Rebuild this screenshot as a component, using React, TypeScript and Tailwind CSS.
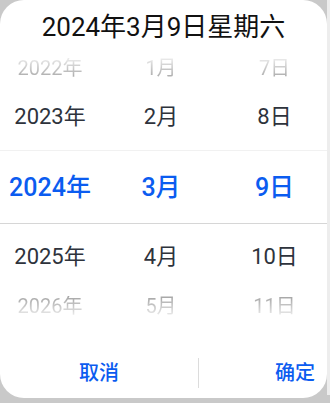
import React from "react";

const font = { fontFamily: 'Roboto, "Noto Sans CJK SC", sans-serif' };

function Row({ items, kind }: { items: string[]; kind: "fadeTop" | "fadeBottom" | "normal" | "selected" }) {
  const h =
    kind === "fadeTop" || kind === "fadeBottom" ? "h-[32px]" : kind === "normal" ? "h-[66px]" : "h-[74px]";
  const text =
    kind === "fadeTop"
      ? "text-[20px] bg-gradient-to-b from-[#ececec] to-[#a9a9a9] bg-clip-text text-transparent"
      : kind === "fadeBottom"
      ? "text-[20px] bg-gradient-to-b from-[#a4a4a4] to-[#ececec] bg-clip-text text-transparent"
      : kind === "normal"
      ? "text-[22px] text-[#2e333c]"
      : "text-[25px] font-medium text-[#0b5cf0]";
  const border = kind === "selected" ? "border-t border-b border-t-[#f1f1f1] border-b-[#d6d6d6]" : "";
  return (
    <div className={`grid grid-cols-[100px_122px_105px] items-center ${h} ${border}`}>
      {items.map((t, i) => (
        <div key={i} className="flex justify-center">
          <span className={`leading-none ${text}`}>{t}</span>
        </div>
      ))}
    </div>
  );
}

export default function App() {
  return (
    <div className="w-[330px] h-[403px] bg-[#c9c9c9] flex" style={font}>
      <div className="w-[327px] h-[398px] bg-white rounded-[24px] flex flex-col">
        <div className="h-[52px] flex items-center justify-center pt-[2px]">
          <span className="text-[26px] font-normal text-[#111111] leading-none">2024年3月9日星期六</span>
        </div>
        <Row kind="fadeTop" items={["2022年", "1月", "7日"]} />
        <Row kind="normal" items={["2023年", "2月", "8日"]} />
        <Row kind="selected" items={["2024年", "3月", "9日"]} />
        <Row kind="normal" items={["2025年", "4月", "10日"]} />
        <Row kind="fadeBottom" items={["2026年", "5月", "11日"]} />
        <div className="flex items-center mt-[36px] h-[30px]">
          <div className="w-[198px] flex justify-center">
            <span className="text-[20px] font-medium text-[#0b5cf0] leading-none">取消</span>
          </div>
          <div className="w-px h-[30px] bg-[#dcdcdc]" />
          <div className="flex-1 flex justify-end pr-[12px]">
            <span className="text-[20px] font-medium text-[#0b5cf0] leading-none">确定</span>
          </div>
        </div>
      </div>
      <div className="w-[3px] h-[395px] bg-[#ededed]" />
    </div>
  );
}
